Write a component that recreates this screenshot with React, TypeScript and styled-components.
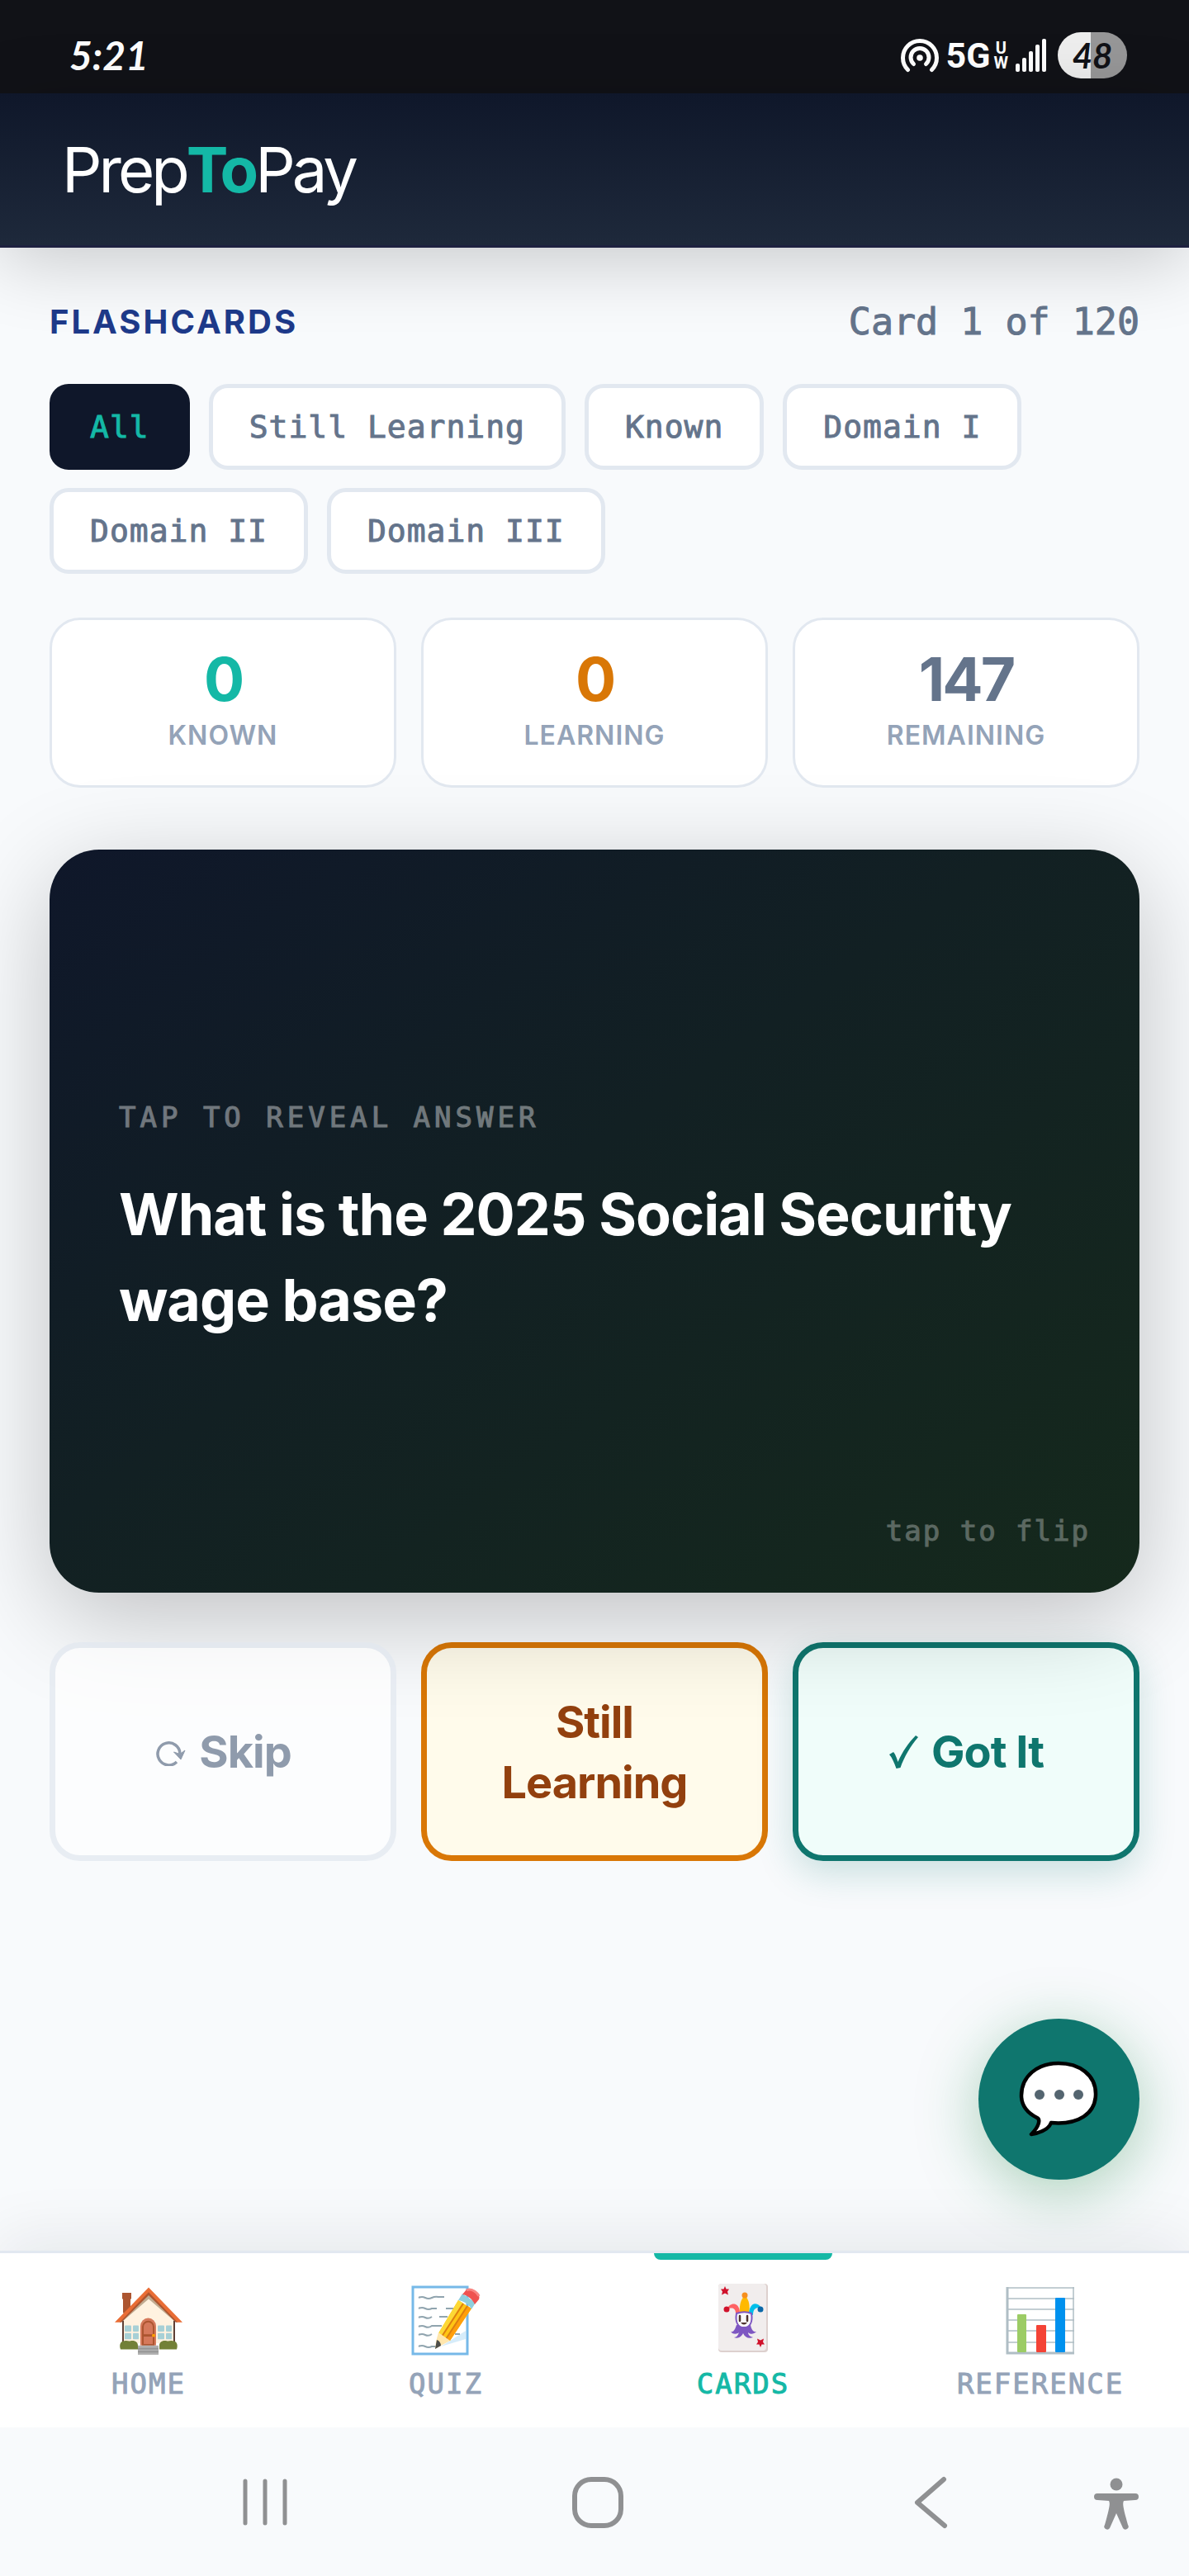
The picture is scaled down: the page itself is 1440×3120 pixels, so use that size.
import React, { useState } from "react";
import styled, { createGlobalStyle } from "styled-components";

const sans = `Inter, "Open Sans", sans-serif`;
const mono = `"DejaVu Sans Mono", "Liberation Mono", monospace`;

const GlobalStyle = createGlobalStyle`
  *, *::before, *::after { box-sizing: border-box; }
  body { margin: 0; background: #f8fafc; font-family: ${sans}; }
  button { font: inherit; color: inherit; cursor: pointer; margin: 0; }
  h1, h2, p, dl, dd, dt { margin: 0; font-weight: inherit; }
  svg { display: block; flex: none; }
`;

const Screen = styled.div`
  display: flex;
  flex-direction: column;
  min-height: 100vh;
`;

/* ---------- status bar ---------- */

const StatusBar = styled.div`
  display: flex;
  align-items: center;
  justify-content: space-between;
  height: 113px;
  padding: 20px 75px 0 84px;
  background: #111217;
  color: #fff;
`;

const Clock = styled.time`
  font: italic 700 48px/60px Lato, sans-serif;
`;

const StatusIcons = styled.div`
  display: flex;
  align-items: center;
  gap: 9px;
`;

const Network = styled.div`
  display: flex;
  align-items: center;
  gap: 4px;
  font: 700 43px/48px Roboto, sans-serif;
`;

const NetworkBand = styled.span`
  display: flex;
  flex-direction: column;
  align-items: center;
  font-size: 20px;
  line-height: 18px;
`;

const Battery = styled.div`
  display: grid;
  place-items: center;
  width: 84px;
  height: 56px;
  margin-left: 4px;
  border-radius: 28px;
  background: linear-gradient(90deg, #eeeeee 48%, #979798 48%);
  color: #111217;
  font: italic 700 42px/56px Lato, sans-serif;
`;

/* ---------- header ---------- */

const Header = styled.header`
  position: relative;
  z-index: 2;
  display: flex;
  align-items: center;
  height: 187px;
  padding: 0 75px;
  border-bottom: 3px solid #1e2140;
  background: linear-gradient(180deg, #0f172a, #1e293b);
  box-shadow: 0 15px 90px rgba(0, 0, 0, 0.2);
`;

const Logo = styled.h1`
  color: #fff;
  font-size: 76px;
  font-weight: 400;
  line-height: 94px;
  letter-spacing: -4px;

  strong {
    color: #14b8a6;
    font-weight: 700;
  }
`;

/* ---------- main ---------- */

const Main = styled.main`
  position: relative;
  flex: 1;
  padding: 60px 60px 300px;
`;

const TitleRow = styled.div`
  display: flex;
  align-items: center;
  justify-content: space-between;
  line-height: 60px;
`;

const Title = styled.h2`
  color: #1e3a8a;
  font-size: 40px;
  font-weight: 700;
  letter-spacing: 3px;
`;

const Counter = styled.p`
  color: #64748b;
  font-family: ${mono};
  font-size: 45px;
  -webkit-text-stroke: 1px;
`;

const Filters = styled.div`
  display: flex;
  flex-wrap: wrap;
  gap: 22px 23px;
  margin-top: 45px;
`;

const Chip = styled.button<{ $active: boolean }>`
  padding: 20px 44px;
  border: 5px solid ${(p) => (p.$active ? "#0f172a" : "#e2e8f0")};
  border-radius: 23px;
  background: ${(p) => (p.$active ? "#0f172a" : "#fff")};
  color: ${(p) => (p.$active ? "#14b8a6" : "#64748b")};
  font-family: ${mono};
  font-size: 38px;
  line-height: 54px;
  letter-spacing: 1px;
  -webkit-text-stroke: 1px;
`;

const ThreeColumns = styled.div`
  display: grid;
  grid-template-columns: repeat(3, 1fr);
  gap: 30px;
`;

const Stats = styled(ThreeColumns).attrs({ as: "dl" })`
  margin-top: 53px;
`;

const Stat = styled.div`
  display: flex;
  flex-direction: column-reverse;
  gap: 6px;
  padding: 35px 20px;
  border: 3px solid #e2e8f0;
  border-radius: 37px;
  background: #fff;
  text-align: center;
`;

const StatLabel = styled.dt`
  color: #94a3b8;
  font-size: 32px;
  font-weight: 600;
  line-height: 50px;
  letter-spacing: 1px;
`;

const StatValue = styled.dd<{ $color: string }>`
  color: ${(p) => p.$color};
  font-size: 73px;
  font-weight: 700;
  line-height: 74px;
  letter-spacing: -3px;
`;

const Flashcard = styled.button`
  position: relative;
  z-index: 1;
  display: flex;
  flex-direction: column;
  justify-content: center;
  gap: 43px;
  width: 100%;
  height: 900px;
  margin-top: 75px;
  padding: 0 84px 2px;
  border: 0;
  border-radius: 60px;
  background: linear-gradient(145deg, #0f172a, #122023 45%, #15291c);
  box-shadow: 0 30px 120px rgba(0, 0, 0, 0.23);
  text-align: left;
`;

const CardHint = styled.span`
  color: #fff;
  opacity: 0.4;
  font-family: ${mono};
  font-size: 34px;
  line-height: 46px;
  letter-spacing: 5px;
  -webkit-text-stroke: 1px;
`;

const Question = styled.span`
  color: #fff;
  font-size: 70px;
  font-weight: 700;
  line-height: 104px;
  letter-spacing: -1px;
`;

const FlipHint = styled.span`
  position: absolute;
  right: 60px;
  bottom: 52px;
  color: #fff;
  opacity: 0.3;
  font-family: ${mono};
  font-size: 34px;
  line-height: 46px;
  letter-spacing: 2px;
  -webkit-text-stroke: 1px;
`;

const Actions = styled(ThreeColumns)`
  margin-top: 60px;
`;

const answerTones = {
  skip: `border-color: #e2e8f0; background: #fff; color: #64748b; opacity: 0.7; z-index: 1;`,
  learning: `border-color: #d97706; background: #fffbeb; color: #92400e;`,
  known: `border-color: #0f766e; background: #f0fdfa; color: #0f766e; box-shadow: 0 15px 45px rgba(15, 118, 110, 0.2);`,
};

const Answer = styled.button<{ $tone: keyof typeof answerTones }>`
  display: flex;
  align-items: center;
  justify-content: center;
  gap: 16px;
  min-height: 265px;
  padding: 0 45px;
  border: 7px solid;
  border-radius: 37px;
  font-size: 54px;
  font-weight: 700;
  line-height: 73px;
  letter-spacing: -1px;
  ${(p) => answerTones[p.$tone]}
`;

const ChatButton = styled.button`
  position: absolute;
  right: 60px;
  bottom: 86px;
  display: grid;
  place-items: center;
  width: 195px;
  height: 195px;
  padding: 0;
  border: 0;
  border-radius: 50%;
  background: #0f766e;
  box-shadow: 0 15px 75px rgba(21, 128, 61, 0.35);
`;

/* ---------- tab bar ---------- */

const TabBar = styled.nav`
  position: relative;
  display: grid;
  grid-template-columns: repeat(4, 1fr);
  height: 214px;
  border-top: 3px solid #e2e8f0;
  background: #fff;
  box-shadow: 0 -15px 75px rgba(15, 23, 42, 0.08);
`;

const Tab = styled.a<{ $active: boolean }>`
  position: relative;
  display: flex;
  flex-direction: column;
  align-items: center;
  gap: 11px;
  padding-top: 34px;
  color: ${(p) => (p.$active ? "#14b8a6" : "#94a3b8")};
  font-family: ${mono};
  font-size: 34px;
  line-height: 46px;
  letter-spacing: 2px;
  text-decoration: none;
  -webkit-text-stroke: 1px;

  &::before {
    content: "";
    display: ${(p) => (p.$active ? "block" : "none")};
    position: absolute;
    top: 0;
    left: 20%;
    width: 60%;
    height: 8px;
    border-radius: 0 0 8px 8px;
    background: #14b8a6;
  }
`;

/* ---------- system navigation ---------- */

const SystemNav = styled.nav`
  position: relative;
  display: flex;
  align-items: center;
  gap: 158px;
  height: 180px;
  padding: 0 56px 0 286px;
  background: #f8fafc;
`;

const SystemKeys = styled.div`
  display: flex;
  flex: 1;
  justify-content: space-between;
`;

const SystemButton = styled.button`
  padding: 0;
  border: 0;
  background: none;
`;

/* ---------- drawings ---------- */

const HotspotIcon = () => (
  <svg width="46" height="42" viewBox="0 0 46 42" fill="none" stroke="#fff" strokeWidth="5" strokeLinecap="round">
    <path d="M8.5 38.5A20.5 20.5 0 1 1 37.5 38.5" />
    <path d="M15.5 31.5A11 11 0 1 1 30.5 31.5" />
    <circle cx="23" cy="24" r="3.8" fill="#fff" stroke="none" />
  </svg>
);

const SignalIcon = () => (
  <svg width="38" height="40" viewBox="0 0 38 40" fill="#fff">
    {[10, 17, 25, 33, 40].map((h, i) => (
      <rect key={h} x={i * 8} y={40 - h} width="5" height={h} rx="2" />
    ))}
  </svg>
);

const SkipIcon = () => (
  <svg width="38" height="34" viewBox="0 0 38 34" fill="none" stroke="currentColor" strokeWidth="3.5">
    <path d="M27 29A13.5 13.5 0 1 1 31 19" />
    <path d="M23.5 17L31 19.5L37 15L32 26Z" fill="currentColor" strokeWidth="1" />
  </svg>
);

const CheckIcon = () => (
  <svg width="36" height="40" viewBox="0 0 36 40" fill="currentColor">
    <path d="M1 23L6 20C8 22 10 27 11.5 32C17 19 25 8 33 0L36 2C27 12 19 26 14.5 39L9.5 40C7 33 4.5 27 1 23Z" />
  </svg>
);

const ChatIcon = () => (
  <svg width="98" height="94" viewBox="0 0 98 94">
    <path
      d="M48 3C22 3 3 19 3 42C3 56 12 64 22 69C26 71 25 79 15 89C27 87 36 83 39 75C72 78 93 64 93 40C93 17 73 3 48 3Z"
      fill="#fff"
      stroke="#000"
      strokeWidth="4.5"
      strokeLinejoin="round"
    />
    <circle cx="25" cy="41" r="6" fill="#546570" />
    <circle cx="49" cy="41" r="6" fill="#546570" />
    <circle cx="72" cy="41" r="6" fill="#546570" />
  </svg>
);

const HomeIcon = () => (
  <svg width="84" height="90" viewBox="0 0 84 96" preserveAspectRatio="none">
    <path d="M10 15h11v8h-1v18h-9V23h-1z" fill="#ac5530" />
    <path d="M10 47L42 17L74 47V80H10Z" fill="#fff2e0" />
    <path d="M9 48L42 16L75 48V53L42 23L9 53Z" fill="#c0ab91" />
    <path d="M10 51h2v27h-2zM72 51h2v27h-2z" fill="#5d4037" />
    <path d="M1 53L42 8L83 53H76L42 16L8 53Z" fill="#e96d35" />
    <path d="M7 53L42 14L77 53H75L42 18L9 53Z" fill="#ac5530" />
    <g fill="#a7d0d6">
      <rect x="13" y="57" width="8" height="8" rx="1" /><rect x="23" y="57" width="7" height="8" rx="1" />
      <rect x="13" y="67" width="8" height="8" rx="1" /><rect x="23" y="67" width="7" height="8" rx="1" />
      <rect x="53" y="57" width="8" height="8" rx="1" /><rect x="63" y="57" width="7" height="8" rx="1" />
      <rect x="53" y="67" width="8" height="8" rx="1" /><rect x="63" y="67" width="7" height="8" rx="1" />
    </g>
    <path d="M32 83V58a9 10 0 0 1 19 0v25z" fill="#d5795b" />
    <path d="M35 82V59a6.5 7 0 0 1 13 0v23z" fill="#d5795b" stroke="#ac5530" strokeWidth="2" />
    <path d="M35 70h13" stroke="#ac5530" strokeWidth="3" />
    <circle cx="48" cy="70" r="2" fill="#ffa000" />
    <path d="M8 88c-2-6 0-11 5-11c3-1 5 1 7 0c6-1 9 2 9 6v5zM76 88c2-6 0-11-5-11c-3-1-5 1-7 0c-6-1-9 2-9 6v5z" fill="#728037" />
    <path d="M29 83h25v12H29z" fill="#b0b0b0" />
    <path d="M29 87h25M29 91h25" stroke="#949494" strokeWidth="2" />
  </svg>
);

const QuizIcon = () => (
  <svg width="84" height="90" viewBox="0 0 84 90">
    <rect x="2" y="7" width="66" height="81" fill="#fff" stroke="#76b9e8" strokeWidth="3" />
    <path d="M66 60V70L46 76L36 79Z" fill="#d6ecfa" />
    <path
      d="M9 20q4-2 8 0t8 0t8-1h7M9 33q4-2 8 0t8 0h6M42 33h10M9 44q4-2 8 0t8-1M34 43h10M9 55q4-2 8 0t8-1h12M9 65q4-2 8 0t8-1M53 64h6M9 79q4-2 8 0t8 0h5"
      fill="none"
      stroke="#90a4ae"
      strokeWidth="2"
    />
    <path d="M33 63L57 23L73 33L47 72Z" fill="#ffc514" />
    <path d="M33 63L57 23L62 26L38 67Z" fill="#fdd835" />
    <path d="M43 70L68 30L73 33L47 72Z" fill="#ff9f0c" />
    <path d="M37 67L63 27M42 70L68 30" stroke="#dd7f10" strokeWidth="2" />
    <path d="M33 62L47 72L36 78L29 82L30 73Z" fill="#ffe6ad" />
    <path d="M31 71C34 72 36 75 36 78L29 82Z" fill="#4e4e4a" />
    <path d="M57 23L62 15L78 26L73 34C70 28 64 24 57 23Z" fill="#8fcfdd" />
    <path d="M62 16L67 10C72 6 85 14 82 22L77 28C74 22 69 17 62 16Z" fill="#ef5350" />
    <path d="M67 11C72 8 80 13 82 18" fill="none" stroke="#f88783" strokeWidth="3" />
  </svg>
);

const CardsIcon = () => (
  <svg width="84" height="90" viewBox="0 0 84 90">
    <rect x="12" y="3" width="60" height="83" rx="4" fill="#ddd0ce" />
    <rect x="12" y="3" width="58" height="81" rx="4" fill="#f1eded" />
    <path d="M20 6l1.5 3.5h3.5l-2 3l1 4l-4-2l-4 2l1-4l-2-3h3.5z" fill="#d0112b" />
    <path d="M63 80l-1.5-3.5H58l2-3l-1-4l4 2l4-2l-1 4l2 3h-3.5z" fill="#d0112b" />
    <path d="M38 39C37 28 40 20 44 18C48 20 51 28 49 39Z" fill="#ffb900" />
    <circle cx="44" cy="17" r="3.5" fill="#f78f1e" />
    <path d="M33 39C33 33 29 31 23 34C24 26 38 23 38 39Z" fill="#ff6264" />
    <circle cx="22" cy="34" r="3.5" fill="#d0112b" />
    <path d="M49 39C50 24 61 25 64 33C58 31 54 33 54 41Z" fill="#00bfea" />
    <circle cx="63" cy="34" r="3.5" fill="#0b68a8" />
    <path d="M34 53C32 59 30 62 27 61C30 65 35 64 37 62C36 65 34 68 31 68C36 70 40 67 42 63C44 68 49 70 54 68C50 67 48 65 48 62C51 65 55 64 58 61C54 62 52 58 51 53Z" fill="#7e57c2" />
    <path d="M34 39C40 37 47 37 52 39C54 50 50 56 43 56C36 56 32 50 34 39Z" fill="#fafafa" stroke="#7e57c2" strokeWidth="2" />
    <path d="M38 42v6M47 42v6" stroke="#4e342e" strokeWidth="2.5" strokeLinecap="round" />
    <path d="M39 50h8q-4 5-8 0z" fill="#4e342e" />
  </svg>
);

const ChartIcon = () => (
  <svg width="84" height="90" viewBox="0 0 84 90">
    <rect x="1" y="7" width="82" height="82" fill="#fff" />
    <path d="M1 8H83M1 21H83M1 34H83M1 47H83M1 60H83M1 74H83M82 7V88" stroke="#b0bec5" strokeWidth="1.5" />
    <path d="M2 7V87H83" fill="none" stroke="#b0bec5" strokeWidth="3" />
    <rect x="14" y="40" width="11" height="46" rx="1" fill="#9ccc65" />
    <rect x="37" y="53" width="12" height="33" rx="1" fill="#f44336" />
    <rect x="60" y="20" width="12" height="66" rx="1" fill="#0091ee" />
  </svg>
);

const RecentsIcon = () => (
  <svg width="70" height="70" viewBox="0 0 70 70" stroke="#8f9092" strokeWidth="5" strokeLinecap="round">
    <path d="M11 10V61M35 10V61M59 10V61" />
  </svg>
);

const HomeKeyIcon = () => (
  <svg width="70" height="70" viewBox="0 0 70 70" fill="none" stroke="#8f9092" strokeWidth="6">
    <rect x="7" y="8" width="56" height="56" rx="20" />
  </svg>
);

const BackIcon = () => (
  <svg width="70" height="70" viewBox="-10 0 70 70" fill="none" stroke="#8f9092" strokeWidth="6" strokeLinecap="round" strokeLinejoin="round">
    <path d="M41 8L9 36L42 64" />
  </svg>
);

const AccessibilityIcon = () => (
  <svg width="64" height="70" viewBox="0 0 64 70" fill="#8f9092">
    <circle cx="32" cy="14" r="7.5" />
    <path d="M9 25H55a3.5 3.5 0 0 1 0 8L41 34C39 37 41 45 46 63A3.5 3.5 0 0 1 40 67L32 49L24 67A3.5 3.5 0 0 1 18 63C23 45 25 37 23 34L9 33a3.5 3.5 0 0 1 0-8Z" />
  </svg>
);

/* ---------- page ---------- */

const filters = ["All", "Still Learning", "Known", "Domain I", "Domain II", "Domain III"];

const stats = [
  { label: "KNOWN", value: 0, color: "#14b8a6" },
  { label: "LEARNING", value: 0, color: "#d97706" },
  { label: "REMAINING", value: 147, color: "#64748b" },
];

const tabs = [
  { label: "HOME", Icon: HomeIcon },
  { label: "QUIZ", Icon: QuizIcon },
  { label: "CARDS", Icon: CardsIcon },
  { label: "REFERENCE", Icon: ChartIcon },
];

export default function App() {
  const [filter, setFilter] = useState("All");

  return (
    <Screen>
      <GlobalStyle />
      <StatusBar>
        <Clock>5:21</Clock>
        <StatusIcons>
          <HotspotIcon />
          <Network>
            5G
            <NetworkBand>
              <span>U</span>
              <span>W</span>
            </NetworkBand>
          </Network>
          <SignalIcon />
          <Battery>48</Battery>
        </StatusIcons>
      </StatusBar>

      <Header>
        <Logo>
          Prep<strong>To</strong>Pay
        </Logo>
      </Header>

      <Main>
        <TitleRow>
          <Title>FLASHCARDS</Title>
          <Counter>Card 1 of 120</Counter>
        </TitleRow>

        <Filters>
          {filters.map((name) => (
            <Chip key={name} type="button" $active={name === filter} aria-pressed={name === filter} onClick={() => setFilter(name)}>
              {name}
            </Chip>
          ))}
        </Filters>

        <Stats>
          {stats.map((s) => (
            <Stat key={s.label}>
              <StatLabel>{s.label}</StatLabel>
              <StatValue $color={s.color}>{s.value}</StatValue>
            </Stat>
          ))}
        </Stats>

        <Flashcard type="button">
          <CardHint>TAP TO REVEAL ANSWER</CardHint>
          <Question>What is the 2025 Social Security wage base?</Question>
          <FlipHint>tap to flip</FlipHint>
        </Flashcard>

        <Actions>
          <Answer type="button" $tone="skip">
            <SkipIcon />
            Skip
          </Answer>
          <Answer type="button" $tone="learning">
            Still Learning
          </Answer>
          <Answer type="button" $tone="known">
            <CheckIcon />
            Got It
          </Answer>
        </Actions>

        <ChatButton type="button" aria-label="Open chat">
          <ChatIcon />
        </ChatButton>
      </Main>

      <TabBar>
        {tabs.map(({ label, Icon }) => (
          <Tab key={label} href={`#${label.toLowerCase()}`} $active={label === "CARDS"}>
            <Icon />
            {label}
          </Tab>
        ))}
      </TabBar>

      <SystemNav>
        <SystemKeys>
          <SystemButton type="button" aria-label="Recent apps">
            <RecentsIcon />
          </SystemButton>
          <SystemButton type="button" aria-label="Home">
            <HomeKeyIcon />
          </SystemButton>
          <SystemButton type="button" aria-label="Back">
            <BackIcon />
          </SystemButton>
        </SystemKeys>
        <SystemButton type="button" aria-label="Accessibility">
          <AccessibilityIcon />
        </SystemButton>
      </SystemNav>
    </Screen>
  );
}
